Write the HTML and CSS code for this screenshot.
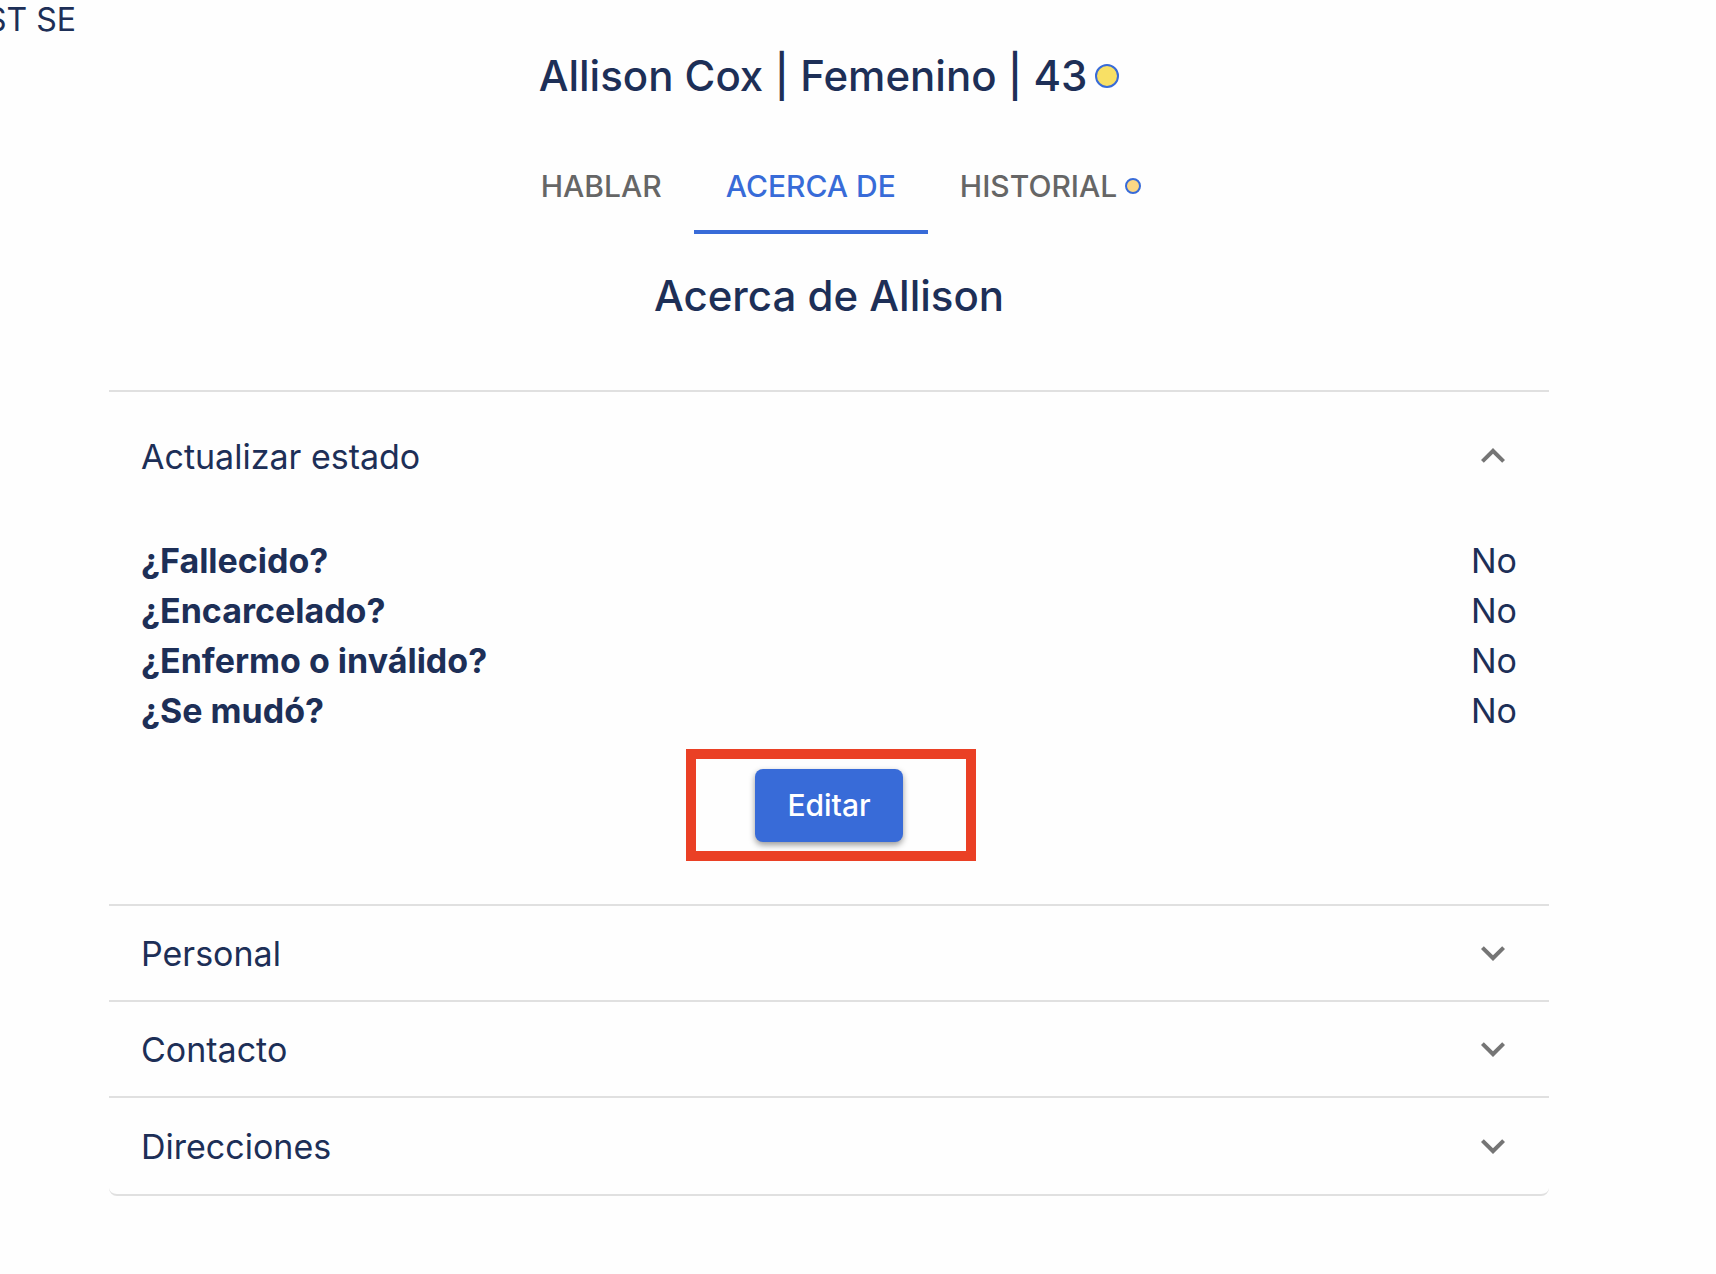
FILE: index.html
```html
<!DOCTYPE html>
<html lang="es">
<head>
    <meta charset="UTF-8">
    <meta name="viewport" content="width=device-width, initial-scale=1.0">

    <title>Acerca de Allison</title>

    <link rel="stylesheet" href="styles.css">
</head>
<body>
    <div class="address">ST SE</div>

    <main class="page">
        <h1 class="person">Allison Cox | Femenino | 43 <span class="dot dot-large"></span></h1>

        <nav class="tabs">
            <a href="#hablar" class="tab">HABLAR</a>
            <a href="#acerca" class="tab active" aria-current="page">ACERCA DE</a>
            <a href="#historial" class="tab">HISTORIAL <span class="dot dot-small"></span></a>
        </nav>

        <h2 class="section-title">Acerca de Allison</h2>

        <div class="accordion">
            <section class="panel">
                <button type="button" class="panel-header expanded" aria-expanded="true">
                    Actualizar estado
                    <svg class="chevron" viewBox="0 0 24 24" aria-hidden="true"><path d="M16.59 8.59 12 13.17 7.41 8.59 6 10l6 6 6-6z"/></svg>
                </button>
                <div class="panel-body">
                    <dl class="status-list">
                        <div class="status-row"><dt>¿Fallecido?</dt><dd>No</dd></div>
                        <div class="status-row"><dt>¿Encarcelado?</dt><dd>No</dd></div>
                        <div class="status-row"><dt>¿Enfermo o inválido?</dt><dd>No</dd></div>
                        <div class="status-row"><dt>¿Se mudó?</dt><dd>No</dd></div>
                    </dl>
                    <div class="actions">
                        <button type="button" class="edit-button">Editar</button>
                        <div class="highlight"></div>
                    </div>
                </div>
            </section>
            <section class="panel">
                <button type="button" class="panel-header" aria-expanded="false">
                    Personal
                    <svg class="chevron" viewBox="0 0 24 24" aria-hidden="true"><path d="M16.59 8.59 12 13.17 7.41 8.59 6 10l6 6 6-6z"/></svg>
                </button>
            </section>
            <section class="panel">
                <button type="button" class="panel-header" aria-expanded="false">
                    Contacto
                    <svg class="chevron" viewBox="0 0 24 24" aria-hidden="true"><path d="M16.59 8.59 12 13.17 7.41 8.59 6 10l6 6 6-6z"/></svg>
                </button>
            </section>
            <section class="panel">
                <button type="button" class="panel-header" aria-expanded="false">
                    Direcciones
                    <svg class="chevron" viewBox="0 0 24 24" aria-hidden="true"><path d="M16.59 8.59 12 13.17 7.41 8.59 6 10l6 6 6-6z"/></svg>
                </button>
            </section>
        </div>
    </main>
</body>
</html>
```
FILE: styles.css
```css
* {
    box-sizing: border-box;
}

body, h1, h2, dl, dd {
    margin: 0;
}

body {
    background: #fefefe;
    color: #1d2f57;
    font-family: Inter, "Open Sans", sans-serif;
    font-size: 34px;
    line-height: 40px;
}

button {
    font-family: inherit;
    color: inherit;
    border: 0;
    cursor: pointer;
}

/* end of the address line, cut off by the left edge */
.address {
    display: flex;
    justify-content: flex-end;
    width: 76px;
    overflow: hidden;
    font-size: 32px;
    white-space: nowrap;
}

.page {
    padding: 8px 167px 72px 109px;
}

.person, .section-title {
    font-size: 42px;
    font-weight: 500;
    line-height: 56px;
}

.person {
    display: flex;
    align-items: center;
    justify-content: center;
    gap: 8px;
}

.dot {
    flex: none;
    border: 2px solid #386bd8;
    border-radius: 50%;
}

.dot-large {
    width: 24px;
    height: 24px;
    background: #f8e065;
}

.dot-small {
    width: 16px;
    height: 16px;
    background: #fbd784;
}

.tabs {
    display: flex;
    justify-content: center;
    margin-top: 34px;
}

.tab {
    display: flex;
    align-items: center;
    gap: 8px;
    height: 96px;
    padding: 4px 32px 0;
    border-bottom: 4px solid transparent;
    color: #666;
    font-size: 30px;
    font-weight: 500;
    text-decoration: none;
}

.tab:last-child {
    padding-right: 8px;
}

.tab.active {
    border-color: #386bd8;
    color: #386bd8;
}

.section-title {
    margin-top: 34px;
    text-align: center;
}

.accordion {
    margin-top: 66px;
    border-bottom: 2px solid #e0e0e0;
    border-radius: 0 0 8px 8px;
}

.panel {
    border-top: 2px solid #e0e0e0;
}

.panel-header {
    display: flex;
    align-items: center;
    justify-content: space-between;
    width: 100%;
    min-height: 94px;
    padding: 0 32px;
    background: none;
    font-size: 34px;
    text-align: left;
}

.panel:last-child .panel-header {
    min-height: 96px;
}

.panel-header.expanded {
    min-height: 128px;
}

.chevron {
    width: 48px;
    height: 48px;
    fill: #757575;
}

.expanded .chevron {
    transform: rotate(180deg);
}

.panel-body {
    padding: 16px 32px 62px;
}

.status-row {
    display: flex;
    justify-content: space-between;
    line-height: 50px;
}

.status-row dt {
    font-weight: 700;
}

.actions {
    display: flex;
    justify-content: center;
    position: relative;
    margin-top: 33px;
}

/* red frame drawn over the button area */
.highlight {
    position: absolute;
    top: -20px;
    left: calc(50% - 143px);
    width: 290px;
    height: 112px;
    border: 10px solid #ea4025;
    pointer-events: none;
}

.edit-button {
    padding: 16px 32px;
    border-radius: 8px;
    background: #386bd8;
    box-shadow: 0 3px 6px rgba(0, 0, 0, 0.4);
    color: #fff;
    font-size: 30px;
    font-weight: 500;
    line-height: 41px;
}
```
